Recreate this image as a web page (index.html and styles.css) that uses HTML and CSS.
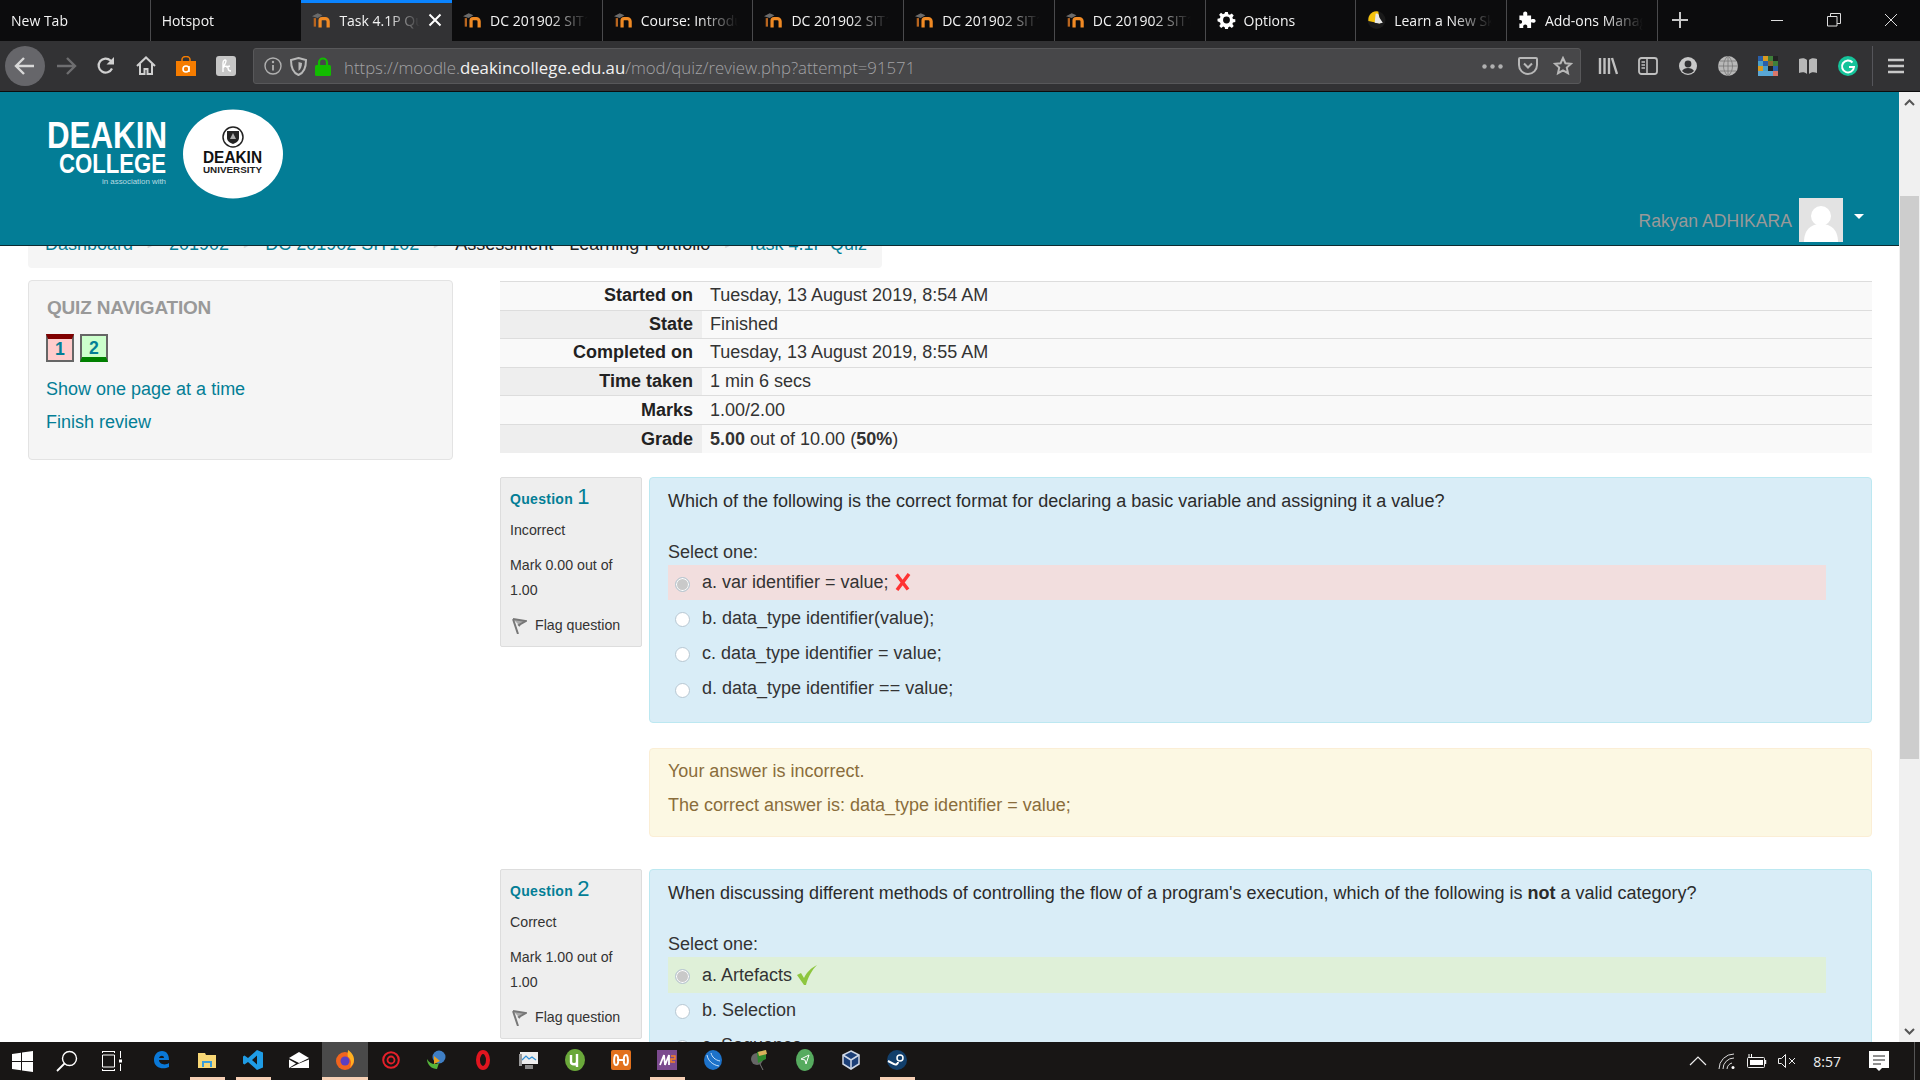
FILE: index.html
```html
<!DOCTYPE html>
<html lang="en">
<head>
    <meta charset="UTF-8">
    <title>Task 4.1P Quiz</title>
    <link rel="stylesheet" href="styles.css">
</head>
<body>
    <svg class="defs" width="0" height="0">
        <symbol id="moodle" viewBox="0 0 20 16">
            <path d="M0 4 6 1l5 2-5 3z" fill="#6b6b6b"/>
            <path d="M3 15V6" stroke="#b8651f" stroke-width="2.400" fill="none"/>
            <path d="M8.500 16V8.500a2 2 0 0 1 2-2h3.500a3 3 0 0 1 3 3V16" stroke="#f08a24" stroke-width="3.400" fill="none"/>
        </symbol>
    </svg>

    <div class="tabbar">
        <div class="tab"><span class="tab-title">New Tab</span></div>
        <div class="tab"><span class="tab-title">Hotspot</span></div>
        <div class="tab active">
            <svg class="fav"><use href="#moodle"/></svg>
            <span class="tab-title">Task 4.1P Quiz</span>
            <svg class="tab-close" width="14" height="14" viewBox="0 0 14 14"><path d="M1.500 1.500l11 11M12.500 1.500l-11 11" stroke="#fff" stroke-width="2"/></svg>
        </div>
        <div class="tab"><svg class="fav"><use href="#moodle"/></svg><span class="tab-title">DC 201902 SIT102</span></div>
        <div class="tab"><svg class="fav"><use href="#moodle"/></svg><span class="tab-title">Course: Introduction</span></div>
        <div class="tab"><svg class="fav"><use href="#moodle"/></svg><span class="tab-title">DC 201902 SIT102</span></div>
        <div class="tab"><svg class="fav"><use href="#moodle"/></svg><span class="tab-title">DC 201902 SIT102</span></div>
        <div class="tab"><svg class="fav"><use href="#moodle"/></svg><span class="tab-title">DC 201902 SIT102</span></div>
        <div class="tab">
            <svg class="fav" viewBox="0 0 20 20"><path d="M8.500 1h3l.5 2.600 1.700.7 2.200-1.500 2.100 2.100-1.500 2.200.7 1.700 2.600.5v3l-2.600.5-.7 1.700 1.500 2.200-2.100 2.100-2.200-1.500-1.700.7-.5 2.600h-3l-.5-2.600-1.700-.7-2.200 1.500-2.100-2.100 1.500-2.200-.7-1.700L0 11.500v-3l2.600-.5.7-1.700-1.500-2.200 2.100-2.100 2.200 1.500 1.700-.7z" fill="#fff"/><circle cx="10" cy="10" r="3.800" fill="#0c0c0d"/></svg>
            <span class="tab-title">Options</span>
        </div>
        <div class="tab">
            <svg class="fav" viewBox="0 0 20 20"><circle cx="10" cy="10" r="10" fill="#1a1a1a"/><path d="M1 11A9 9.500 0 0 1 12 .5L14 14z" fill="#f4c20d"/><path d="M9 3c3-1 4 2 4 4l4 6-4 1-5-1z" fill="#e8e8e8"/></svg>
            <span class="tab-title">Learn a New Skill</span>
        </div>
        <div class="tab">
            <svg class="fav" viewBox="0 0 20 20"><path d="M1 5h4.500C4.500 2 6 .5 7.500.5S10.500 2 9.500 5H14v4.500c2.500-1 5-.5 5 1.500s-2.500 2.500-5 1.500V19H9.500c1-2.500-.5-4-2-4s-3 1.500-2 4H1v-5c2 .5 3-.5 3-2s-1-2.500-3-2z" fill="#fff"/></svg>
            <span class="tab-title">Add-ons Manager</span>
        </div>
        <div class="newtab">
            <svg width="18" height="18" viewBox="0 0 18 18"><path d="M9 1v16M1 9h16" stroke="#c8c8c8" stroke-width="2"/></svg>
        </div>
        <div class="window-btns">
            <svg width="14" height="14" viewBox="0 0 14 14"><path d="M1 7.500h12" stroke="#ddd"/></svg>
            <svg width="14" height="14" viewBox="0 0 14 14"><path d="M.5 3.500h9.500v9.500H.5zM3.500 3.500V.5h10v10h-3.500" stroke="#ddd" fill="none"/></svg>
            <svg width="14" height="14" viewBox="0 0 14 14"><path d="M1 1l12 12M13 1L1 13" stroke="#ddd"/></svg>
        </div>
    </div>

    <div class="toolbar">
        <div class="tool back">
            <svg width="22" height="20" viewBox="0 0 22 20"><path d="M20 10H3M10 2l-8 8 8 8" stroke="#d8d8d8" stroke-width="2.400" fill="none"/></svg>
        </div>
        <div class="tool">
            <svg width="22" height="20" viewBox="0 0 22 20"><path d="M2 10h17M12 2l8 8-8 8" stroke="#6e6e70" stroke-width="2.400" fill="none"/></svg>
        </div>
        <div class="tool">
            <svg width="20" height="20" viewBox="0 0 20 20"><path d="M16 12.500A7 7 0 1 1 14.500 4.500L17 7" stroke="#d0d0d0" stroke-width="2.200" fill="none"/><path d="M18 1v7.500h-7.500z" fill="#d0d0d0"/></svg>
        </div>
        <div class="tool">
            <svg width="20" height="20" viewBox="0 0 20 20"><path d="M1 10 10 1.500 19 10M4 8v10h4.500v-5h3v5H16V8" stroke="#d0d0d0" stroke-width="2" fill="none"/></svg>
        </div>
        <div class="tool">
            <svg width="20" height="20" viewBox="0 0 20 20"><path d="M0 5h20v15H0z" fill="#f57c00"/><path d="M6 7V3.500a4 3 0 0 1 8 0V7" stroke="#f57c00" stroke-width="1.500" fill="none"/><circle cx="10" cy="13" r="3" stroke="#fff" stroke-width="1.600" fill="none"/><path d="M13 10v6" stroke="#fff" stroke-width="1.600"/></svg>
        </div>
        <div class="tool">
            <svg width="20" height="20" viewBox="0 0 20 20"><rect width="20" height="20" rx="3" fill="#c6c6c6"/><path d="M7 16V7c0-3 3-4 3-2s-2 4-3 7c1-2 5-3 5 0 0 2 1 3 3 3M10 11l4-1" stroke="#fff" stroke-width="1.400" fill="none"/></svg>
        </div>

        <div class="urlbar">
            <svg width="18" height="18" viewBox="0 0 18 18"><circle cx="9" cy="9" r="8" stroke="#b0b0b0" stroke-width="1.400" fill="none"/><path d="M9 8v5.500" stroke="#b0b0b0" stroke-width="1.800"/><circle cx="9" cy="5" r="1.200" fill="#b0b0b0"/></svg>
            <svg width="17" height="19" viewBox="0 0 17 19"><path d="M8.500 1 16 3c0 8-2 13-7.500 15C3 16 1 11 1 3z" stroke="#b8b8b8" stroke-width="2" fill="none"/><path d="M8.500 5 12 6c0 3.500-1 6-3.500 8z" fill="#b8b8b8"/></svg>
            <svg width="16" height="19" viewBox="0 0 16 19"><path d="M4 9V5.500a4 4 0 0 1 8 0V9" stroke="#12bc00" stroke-width="2.200" fill="none"/><rect y="8" width="16" height="11" rx="1.500" fill="#12bc00"/></svg>
            <span class="url"><span>https://moodle.</span><b>deakincollege.edu.au</b><span>/mod/quiz/review.php?attempt=91571</span></span>
            <div class="url-end">
                <svg width="21" height="5" viewBox="0 0 21 5"><circle cx="2.500" cy="2.500" r="2.200" fill="#b0b0b0"/><circle cx="10.500" cy="2.500" r="2.200" fill="#b0b0b0"/><circle cx="18.500" cy="2.500" r="2.200" fill="#b0b0b0"/></svg>
                <svg width="20" height="18" viewBox="0 0 20 18"><path d="M2 1h16a1 1 0 0 1 1 1v6a9 9 0 0 1-18 0V2a1 1 0 0 1 1-1z" stroke="#b8b8b8" stroke-width="2" fill="none"/><path d="M6 6.500l4 4 4-4" stroke="#b8b8b8" stroke-width="2" fill="none"/></svg>
                <svg width="20" height="20" viewBox="0 0 20 20"><path d="M10 2l2.400 5.200 5.600.6-4.200 3.800 1.200 5.600-5-2.900-5 2.900 1.200-5.600L2 7.800l5.600-.6z" stroke="#b8b8b8" stroke-width="2" fill="none"/></svg>
            </div>
        </div>

        <div class="tool-group">
            <div class="tool">
                <svg width="20" height="18" viewBox="0 0 20 18"><path d="M2 1v16M6.500 1v16M11 1v16M14 1l5 16" stroke="#c0c0c0" stroke-width="2.400" fill="none"/></svg>
            </div>
            <div class="tool">
                <svg width="20" height="18" viewBox="0 0 20 18"><rect x="1" y="1" width="18" height="16" rx="2.500" stroke="#c0c0c0" stroke-width="1.800" fill="none"/><path d="M9 1v16M3.500 5H7M3.500 8H7M3.500 11H7" stroke="#c0c0c0" stroke-width="1.500"/></svg>
            </div>
            <div class="tool">
                <svg width="18" height="18" viewBox="0 0 18 18"><circle cx="9" cy="9" r="9" fill="#c8c8c8"/><circle cx="9" cy="7" r="3.400" fill="#323234"/><path d="M3 14c2-4 10-4 12 0a8 8 0 0 1-12 0z" fill="#323234"/></svg>
            </div>
            <div class="tool">
                <svg width="20" height="20" viewBox="0 0 20 20"><circle cx="10" cy="10" r="10" fill="#b8b8b8"/><path d="M10 0v20M0 10h20M2 5h16M2 15h16M10 0c-6 5-6 15 0 20M10 0c6 5 6 15 0 20" stroke="#777" stroke-width=".8" fill="none"/></svg>
            </div>
            <div class="tool">
                <div class="mosaic">
                    <i class="m1"></i><i class="m2"></i><i class="m3"></i><i class="m4"></i>
                    <i class="m5"></i><i class="m1"></i><i class="m6"></i><i class="m3"></i>
                    <i class="m2"></i><i class="m5"></i><i class="m4"></i><i class="m1"></i>
                    <i class="m7"></i><i class="m7"></i><i class="m7"></i><i class="m8"></i>
                </div>
            </div>
            <div class="tool">
                <svg width="20" height="18" viewBox="0 0 20 18"><path d="M1 2c3-1 6-1 8 1v14c-2-2-5-2-8-1zM19 2c-3-1-6-1-8 1v14c2-2 5-2 8-1z" fill="#b8b8b8"/></svg>
            </div>
            <div class="tool">
                <svg width="20" height="20" viewBox="0 0 20 20"><circle cx="10" cy="10" r="10" fill="#15c39a"/><path d="M14.500 6.500A6 6 0 1 0 16 11h-5" stroke="#fff" stroke-width="2" fill="none"/></svg>
            </div>
        </div>
        <div class="tool-sep"></div>
        <div class="tool">
            <svg width="16" height="16" viewBox="0 0 16 16"><path d="M0 2h16M0 8h16M0 14h16" stroke="#c8c8c8" stroke-width="2.400"/></svg>
        </div>
    </div>

    <div class="viewport">
        <div class="page">
            <header class="site-header">
                <svg class="logo" width="236" height="90" viewBox="0 0 236 90">
                    <text x="-1" y="39" class="logo-big" textLength="120" lengthAdjust="spacingAndGlyphs">DEAKIN</text>
                    <text x="11" y="63.500" class="logo-mid" textLength="107" lengthAdjust="spacingAndGlyphs">COLLEGE</text>
                    <text x="54" y="75" class="logo-small" textLength="64" lengthAdjust="spacingAndGlyphs">in association with</text>
                    <ellipse cx="185" cy="45" rx="50" ry="44.500" fill="#fff"/>
                    <circle cx="185" cy="28" r="10" fill="none" stroke="#222" stroke-width="1.500"/>
                    <path d="M179 22h12v7c0 3-3 5-6 6-3-1-6-3-6-6z" fill="#222"/>
                    <path d="M185 24l-3 6h6z" fill="#aaa"/>
                    <text x="155" y="54" class="logo-uni" textLength="59" lengthAdjust="spacingAndGlyphs">DEAKIN</text>
                    <text x="155" y="64" class="logo-uni2" textLength="59" lengthAdjust="spacingAndGlyphs">UNIVERSITY</text>
                </svg>
                <div class="user-menu">
                    <span class="user-name">Rakyan ADHIKARA</span>
                    <svg class="avatar" width="44" height="44" viewBox="0 0 44 44"><rect width="44" height="44" fill="#e3e3e3"/><circle cx="22" cy="18" r="10" fill="#fff"/><path d="M5 44c0-14 9-18 17-18s17 4 17 18z" fill="#fff"/></svg>
                    <span class="caret"></span>
                </div>
            </header>

            <nav class="breadcrumb">
                <a href="#">Dashboard</a><span class="crumb-sep">►</span>
                <a href="#">201902</a><span class="crumb-sep">►</span>
                <a href="#">DC 201902 SIT102</a><span class="crumb-sep">►</span>
                <span class="crumb-now">Assessment - Learning Portfolio</span><span class="crumb-sep">►</span>
                <a href="#">Task 4.1P Quiz</a>
            </nav>

            <div class="columns">
                <aside class="quiz-nav">
                    <h3>QUIZ NAVIGATION</h3>
                    <div class="nav-btns">
                        <a class="nav-btn wrong" href="#">1</a>
                        <a class="nav-btn right" href="#">2</a>
                    </div>
                    <a class="nav-link" href="#">Show one page at a time</a>
                    <a class="nav-link" href="#">Finish review</a>
                </aside>

                <main class="review">
                    <table class="summary">
                        <tr><th>Started on</th><td>Tuesday, 13 August 2019, 8:54 AM</td></tr>
                        <tr><th>State</th><td>Finished</td></tr>
                        <tr><th>Completed on</th><td>Tuesday, 13 August 2019, 8:55 AM</td></tr>
                        <tr><th>Time taken</th><td>1 min 6 secs</td></tr>
                        <tr><th>Marks</th><td>1.00/2.00</td></tr>
                        <tr><th>Grade</th><td><b>5.00</b> out of 10.00 (<b>50%</b>)</td></tr>
                    </table>

                    <section class="question">
                        <div class="q-info">
                            <h4>Question <span>1</span></h4>
                            <p class="q-state">Incorrect</p>
                            <p class="q-mark">Mark 0.00 out of 1.00</p>
                            <p class="q-flag">
                                <svg width="15" height="16" viewBox="0 0 15 16"><path d="M1 1l13 2-7 4 1 1M1 1l5 15" stroke="#777" stroke-width="2" fill="#aaa"/></svg>
                                Flag question
                            </p>
                        </div>
                        <div class="q-body">
                            <div class="q-box">
                                <p class="q-text">Which of the following is the correct format for declaring a basic variable and assigning it a value?</p>
                                <p class="q-select">Select one:</p>
                                <div class="answer wrong-ans">
                                    <span class="radio checked"></span>
                                    <span>a. var identifier = value;</span>
                                    <svg class="mark-icon" width="17" height="18" viewBox="0 0 17 18"><path d="M2.500 1.500 14 16.500M15 1 3 17" stroke="#f33" stroke-width="3.400" fill="none"/></svg>
                                </div>
                                <div class="answer"><span class="radio"></span><span>b. data_type identifier(value);</span></div>
                                <div class="answer"><span class="radio"></span><span>c. data_type identifier = value;</span></div>
                                <div class="answer"><span class="radio"></span><span>d. data_type identifier == value;</span></div>
                            </div>
                            <div class="q-feedback">
                                <p>Your answer is incorrect.</p>
                                <p>The correct answer is: data_type identifier = value;</p>
                            </div>
                        </div>
                    </section>

                    <section class="question second">
                        <div class="q-info">
                            <h4>Question <span>2</span></h4>
                            <p class="q-state">Correct</p>
                            <p class="q-mark">Mark 1.00 out of 1.00</p>
                            <p class="q-flag">
                                <svg width="15" height="16" viewBox="0 0 15 16"><path d="M1 1l13 2-7 4 1 1M1 1l5 15" stroke="#777" stroke-width="2" fill="#aaa"/></svg>
                                Flag question
                            </p>
                        </div>
                        <div class="q-body">
                            <div class="q-box">
                                <p class="q-text">When discussing different methods of controlling the flow of a program's execution, which of the following is <b>not</b> a valid category?</p>
                                <p class="q-select">Select one:</p>
                                <div class="answer right-ans">
                                    <span class="radio checked"></span>
                                    <span>a. Artefacts</span>
                                    <svg class="mark-icon" width="20" height="20" viewBox="0 0 20 20"><path d="M0 10l4-2 3 5C10 7 14 3 20 0c-5 5-9 12-11 20H7z" fill="#8dc63f"/></svg>
                                </div>
                                <div class="answer"><span class="radio"></span><span>b. Selection</span></div>
                                <div class="answer"><span class="radio"></span><span>c. Sequence</span></div>
                            </div>
                        </div>
                    </section>
                </main>
            </div>
        </div>

        <div class="scrollbar">
            <div class="sb-btn"><svg width="11" height="7" viewBox="0 0 11 7"><path d="M1 6l4.500-4.500L10 6" stroke="#555" stroke-width="2" fill="none"/></svg></div>
            <div class="sb-thumb"></div>
            <div class="sb-btn sb-down"><svg width="11" height="7" viewBox="0 0 11 7"><path d="M1 1l4.500 4.500L10 1" stroke="#555" stroke-width="2" fill="none"/></svg></div>
        </div>
    </div>

    <div class="taskbar">
        <div class="tb-start">
            <svg width="21" height="21" viewBox="0 0 21 21"><path d="M0 3l9-1.300v8.300H0zM10 1.500 21 0v10H10zM0 11h9v8.300L0 18zM10 11h11v10l-11-1.500z" fill="#fff"/></svg>
        </div>
        <div class="tb-start search">
            <svg width="22" height="22" viewBox="0 0 22 22"><circle cx="13.500" cy="8.500" r="7" stroke="#fff" stroke-width="1.400" fill="none"/><path d="M8.500 13.500 1 21" stroke="#fff" stroke-width="1.800"/></svg>
        </div>
        <div class="tb-start">
            <svg width="20" height="20" viewBox="0 0 20 20"><path d="M0 .5h13M0 19.500h13M.5 4h12v12H.5zM.5 0v2M12.500 0v2M.5 18v2M12.500 18v2M18.500 0v7M18.500 13v7" stroke="#fff" fill="none"/><rect x="17" y="8.500" width="3" height="3" fill="#fff"/></svg>
        </div>
        <div class="tb-apps">
            <div class="tb-item"><svg width="18" height="20" viewBox="0 0 18 20"><path d="M2 10c0-5 3-9 8-9 5 0 7 4 7 9H7c0 4 6 6 10 3v4c-6 3-15 1-15-7zm5-2h5c0-3-4-3-5 0z" fill="#0a78d7"/></svg></div>
            <div class="tb-item running"><svg width="18" height="16" viewBox="0 0 18 16"><path d="M0 1h7l1 2h10v13H0z" fill="#f8d775"/><path d="M4 9h10v6h-2v-4H6v4H4z" fill="#3b9edb"/></svg></div>
            <div class="tb-item running"><svg width="20" height="20" viewBox="0 0 20 20"><path d="M14 0l6 2.500v15L14 20 5 12l-3.500 2.500L0 13.500v-7L1.500 5.500 5 8zm0 5.500L9 10l5 4.500z" fill="#1f9ce5"/></svg></div>
            <div class="tb-item"><svg width="20" height="16" viewBox="0 0 20 16"><path d="M0 6 10 0l10 6L10 11z" fill="#fff"/><path d="M0 7.500l7 4L0 16zM20 7.500V16H1l9-4.500z" fill="#fff"/></svg></div>
            <div class="tb-item running current"><svg width="20" height="20" viewBox="0 0 20 20"><circle cx="10" cy="11" r="9" fill="#f0641e"/><path d="M13 0c3 2 6 5 6 10 0 3-2 6-4 7 2-4 1-8-2-10-1-2 0-5 0-7z" fill="#ffb020"/><circle cx="10" cy="11" r="4.500" fill="#5a3fc0"/></svg></div>
            <div class="tb-item"><svg width="18" height="18" viewBox="0 0 18 18"><circle cx="9" cy="9" r="7.800" stroke="#e5202a" stroke-width="2" fill="none"/><circle cx="9" cy="9" r="3.500" stroke="#e5202a" stroke-width="1.800" fill="none"/></svg></div>
            <div class="tb-item"><svg width="20" height="20" viewBox="0 0 20 20"><circle cx="12" cy="7" r="6.500" fill="#3f7fc5"/><path d="M0 9c3 5 7 6 12 4l-2 6c-5 0-10-4-10-10z" fill="#55b33b"/><path d="M7 6l6 5-6 3z" fill="#e8a020"/></svg></div>
            <div class="tb-item"><svg width="14" height="20" viewBox="0 0 14 20"><ellipse cx="7" cy="10" rx="5" ry="8" stroke="#e0151f" stroke-width="4" fill="none"/></svg></div>
            <div class="tb-item"><svg width="20" height="20" viewBox="0 0 20 20"><path d="M1 2h18v12H1z" fill="#eee"/><path d="M3 10l4-4 3 3 3-2 4 3" stroke="#2f8fd6" stroke-width="1.200" fill="none"/><path d="M6 15h8v4H6z" fill="#888"/><path d="M0 4h3v12H0z" fill="#999"/></svg></div>
            <div class="tb-item"><svg width="20" height="22" viewBox="0 0 20 22"><ellipse cx="10" cy="11" rx="10" ry="11" fill="#6aa83a"/><path d="M6 6v7c0 3 6 3 6 0V6M12 5v13" stroke="#fff" stroke-width="2.400" fill="none"/></svg></div>
            <div class="tb-item"><svg width="20" height="20" viewBox="0 0 20 20"><rect width="20" height="20" rx="2" fill="#e2711d"/><path d="M5 5c3 0 3 10 0 10s-2-10 0-10zM15 5c-3 0-3 10 0 10s2-10 0-10zM6 10h8" stroke="#fff" stroke-width="2" fill="none"/></svg></div>
            <div class="tb-item running"><svg width="20" height="20" viewBox="0 0 20 20"><rect width="20" height="20" fill="#7b4a8e"/><path d="M3 15 7 5l1 10 4-10v10" stroke="#fff" stroke-width="1.800" fill="none"/><path d="M14 6h4v3h-4v3h4" stroke="#f58025" stroke-width="1.500" fill="none"/></svg></div>
            <div class="tb-item"><svg width="18" height="20" viewBox="0 0 18 20"><ellipse cx="9" cy="10" rx="9" ry="10" fill="#1d72c9"/><path d="M3 5c1 6 6 10 12 11M7 3c1 4 4 7 9 8" stroke="#cde4fa" stroke-width="1" fill="none"/></svg></div>
            <div class="tb-item"><svg width="18" height="22" viewBox="0 0 18 22"><circle cx="7" cy="10" r="6" fill="#666"/><path d="M7 3l9-2v9l-8 4z" fill="#2e8b2e"/><path d="M8 3l8-2 1 4-8 2z" fill="#d9b25c"/><path d="M10 15l3 6" stroke="#777"/></svg></div>
            <div class="tb-item"><svg width="18" height="22" viewBox="0 0 18 22"><ellipse cx="9" cy="11" rx="9" ry="11" fill="#56ab5f"/><path d="M13 6 5 10l4 1 1 4z" stroke="#fff" fill="none"/></svg></div>
            <div class="tb-item"><svg width="18" height="20" viewBox="0 0 18 20"><path d="M9 1l8 4v9l-8 5-8-5V5z" stroke="#cfd8e6" stroke-width="1.500" fill="#1c3f77"/><path d="M1 5l8 5 8-5M9 10v9" stroke="#cfd8e6" stroke-width="1.500" fill="none"/></svg></div>
            <div class="tb-item running"><svg width="20" height="20" viewBox="0 0 20 20"><circle cx="10" cy="10" r="10" fill="#123f6b"/><circle cx="13" cy="8" r="3" fill="none" stroke="#fff" stroke-width="1.500"/><path d="M1 11l6 3a2.500 2.500 0 0 0 4-2" stroke="#fff" stroke-width="2" fill="none"/></svg></div>
        </div>
        <div class="tb-tray">
            <svg width="18" height="10" viewBox="0 0 18 10"><path d="M1 9l8-8 8 8" stroke="#eee" stroke-width="1.200" fill="none"/></svg>
            <svg width="18" height="16" viewBox="0 0 18 16"><path d="M1 16A15 15 0 0 1 16 1M5 16A11 11 0 0 1 16 5M9 16a7 7 0 0 1 5-6" stroke="#ddd" fill="none"/><circle cx="15" cy="14.500" r="1.500" fill="#fff"/></svg>
            <svg width="20" height="14" viewBox="0 0 20 14"><rect x=".5" y="3.500" width="17" height="10" rx="1" stroke="#eee" fill="none"/><rect x="3" y="6" width="13" height="5" fill="#fff"/><path d="M18.500 6v4" stroke="#eee" stroke-width="1.500"/><path d="M2 0v4M4.500 0v4" stroke="#fff"/></svg>
            <svg width="19" height="14" viewBox="0 0 19 14"><path d="M.5 4.500h3L7.500.5v13l-4-4h-3z" stroke="#eee" fill="none"/><path d="M11 4l6 6M17 4l-6 6" stroke="#eee"/></svg>
            <span class="tb-time">8:57</span>
            <svg class="tb-notify" width="20" height="20" viewBox="0 0 20 20"><path d="M0 0h20v17h-7l-3 3-3-3H0z" fill="#fff"/><path d="M4 5h12M4 9h12M4 13h8" stroke="#222"/></svg>
        </div>
    </div>
</body>
</html>
```

FILE: styles.css
```css
html, body {
    margin: 0;
    padding: 0;
    height: 1080px;
    overflow: hidden;
    font-family: "Liberation Sans", Arial, sans-serif;
    background-color: white;
    color: #333;
}
body {
    display: flex;
    flex-direction: column;
}
a {
    color: #037e96;
    text-decoration: none;
}
p {
    margin: 0;
}
.defs {
    position: absolute;
}

/* browser tabs */
.tabbar {
    display: flex;
    height: 41px;
    flex: none;
    background-color: #0c0c0d;
    font-family: "Open Sans", sans-serif;
    font-size: 14px;
    color: #f4f4f4;
}
.tab {
    width: 150.7px;
    box-sizing: border-box;
    display: flex;
    align-items: center;
    gap: 8px;
    padding: 0 14px 1px 11px;
    border-right: 1px solid #4a4a4c;
    flex: none;
}
.tab.active {
    background-color: #323234;
    border-top: 3px solid #0a84ff;
    border-right: none;
    padding-right: 10px;
    padding-top: 0;
    padding-bottom: 4px;
}
.tab:nth-child(2) {
    border-right: none;
}
.tab-title {
    flex: 1;
    white-space: nowrap;
    overflow: hidden;
    -webkit-mask-image: linear-gradient(to right, black 60%, transparent 100%);
    mask-image: linear-gradient(to right, black 60%, transparent 100%);
}
.fav {
    width: 19px;
    height: 18px;
    flex: none;
}
.tab-close {
    flex: none;
}
.newtab {
    width: 44px;
    display: flex;
    align-items: center;
    justify-content: center;
    margin-top: -2px;
}
.window-btns {
    margin-left: auto;
    display: flex;
    gap: 43px;
    align-items: center;
    padding-right: 22px;
    margin-top: -2px;
}

/* toolbar */
.toolbar {
    display: flex;
    align-items: center;
    height: 50px;
    flex: none;
    padding-left: 5px;
    background-color: #323234;
    border-bottom: 1px solid #0c0c0d;
}
.tool {
    width: 40px;
    height: 40px;
    display: flex;
    align-items: center;
    justify-content: center;
    flex: none;
}
.tool.back {
    margin-right: 1px;
    background-color: #66666a;
    border-radius: 50%;
}
.tool-group {
    display: flex;
    margin-left: 7px;
}
.tool-sep {
    width: 1px;
    height: 40px;
    margin: 0 3px 0 4px;
    background-color: #55555a;
}
.urlbar {
    width: 1328px;
    height: 36px;
    margin-left: 7px;
    box-sizing: border-box;
    display: flex;
    align-items: center;
    gap: 8px;
    padding: 0 7px 0 10px;
    background-color: #474749;
    border: 1px solid #58585a;
    border-radius: 3px;
    flex: none;
}
.url {
    font-family: "Open Sans", sans-serif;
    font-weight: 300;
    font-size: 16.8px;
    color: #a2a2a5;
    white-space: nowrap;
    margin: 2px 0 0 5px;
}
.url b {
    font-weight: normal;
    color: #f2f2f2;
}
.url-end {
    margin-left: auto;
    display: flex;
    align-items: center;
    gap: 15px;
}
.mosaic {
    width: 20px;
    height: 20px;
    display: grid;
    grid-template-columns: repeat(4, 1fr);
    grid-template-rows: repeat(4, 1fr);
}
.m1 { background-color: #2a5fa8; }
.m2 { background-color: #d99a20; }
.m3 { background-color: #3e7f3a; }
.m4 { background-color: #222; }
.m5 { background-color: #4aa0c8; }
.m6 { background-color: #8a6a30; }
.m7 { background-color: #5aa7d6; }
.m8 { background-color: #d9776a; }

/* page area */
.viewport {
    flex: 1;
    min-height: 0;
    display: flex;
}
.page {
    flex: 1;
    min-width: 0;
    overflow: hidden;
}
.scrollbar {
    width: 21px;
    flex: none;
    display: flex;
    flex-direction: column;
    background-color: #f0f0f0;
}
.sb-btn {
    height: 21px;
    display: flex;
    align-items: center;
    justify-content: center;
    flex: none;
}
.sb-thumb {
    height: 563px;
    margin: 83px 1px 0;
    background-color: #cdcdcd;
}
.sb-down {
    margin-top: auto;
}

/* site header */
.site-header {
    position: relative;
    z-index: 2;
    height: 153px;
    display: flex;
    justify-content: space-between;
    padding: 0 35px 0 48px;
    background-color: #037d96;
    border-bottom: 1px solid #0d2a30;
}
.logo {
    margin-top: 17px;
}
.logo-big {
    font: bold 37px "Liberation Sans", sans-serif;
    fill: white;
}
.logo-mid {
    font: bold 28px "Liberation Sans", sans-serif;
    fill: white;
}
.logo-small {
    font: 7px "Liberation Sans", sans-serif;
    fill: #b9dbe2;
}
.logo-uni {
    font: bold 17px "Liberation Sans", sans-serif;
    fill: #111;
}
.logo-uni2 {
    font: bold 8.500px "Liberation Sans", sans-serif;
    fill: #222;
}
.user-menu {
    display: flex;
    align-self: flex-end;
    align-items: center;
    margin-bottom: 3px;
}
.user-name {
    font-size: 17.6px;
    color: #999;
    margin-top: 2px;
}
.avatar {
    margin-left: 7px;
}
.caret {
    width: 0;
    height: 0;
    margin: -7px 0 0 11px;
    border-top: 5px solid white;
    border-left: 5px solid transparent;
    border-right: 5px solid transparent;
}

/* breadcrumb sits partly behind the header */
.breadcrumb {
    width: max-content;
    margin: -24px 0 0 28px;
    padding: 10px 15px 11px 17px;
    display: flex;
    font-size: 18px;
    line-height: 25px;
    background-color: #f5f5f5;
    border-radius: 4px;
}
.crumb-sep {
    width: 36px;
    text-align: center;
    color: #d5d5d5;
    font-size: 11px;
}
.crumb-now {
    color: #222;
}

.columns {
    display: flex;
    align-items: flex-start;
    padding: 12px 27px 0 28px;
}

/* quiz navigation block */
.quiz-nav {
    width: 425px;
    height: 180px;
    box-sizing: border-box;
    flex: none;
    margin-right: 47px;
    padding: 14px 17px;
    background-color: #f5f5f5;
    border: 1px solid #e3e3e3;
    border-radius: 4px;
}
.quiz-nav h3 {
    margin: 0 0 14px 1px;
    font-size: 19px;
    line-height: 25px;
    letter-spacing: -0.2px;
    color: #999;
}
.nav-btns {
    display: flex;
    gap: 6px;
    margin-bottom: 11px;
}
.nav-btn {
    width: 28px;
    height: 28px;
    box-sizing: border-box;
    border: 2px solid #666;
    text-align: center;
    font-weight: bold;
    font-size: 17.6px;
    line-height: 25px;
}
.nav-btn.wrong {
    background-color: #fcc;
    border-top: 5px solid #800000;
    line-height: 21px;
}
.nav-btn.right {
    background-color: #cfc;
    border-bottom: 5px solid #008000;
}
.nav-link {
    display: block;
    font-size: 18px;
    line-height: 33px;
}

/* attempt summary */
.review {
    flex: 1;
    min-width: 0;
    padding-top: 1px;
}
.summary {
    width: 100%;
    border-collapse: collapse;
    font-size: 18px;
}
.summary tr {
    height: 28.6px;
}
.summary th, .summary td {
    padding: 0;
    border-top: 1px solid #ddd;
    background-color: #f9f9f9;
}
.summary th {
    width: 193px;
    padding-right: 9px;
    text-align: right;
    color: #222;
}
.summary td {
    padding-left: 8px;
    color: #333;
}
.summary tr:nth-child(even) th {
    background-color: #eee;
}

/* questions */
.question {
    display: flex;
    align-items: flex-start;
    gap: 7px;
    margin-top: 24px;
}
.question.second {
    margin-top: 32px;
}
.q-info {
    width: 142px;
    box-sizing: border-box;
    flex: none;
    padding: 8px 9px 8px;
    background-color: #eee;
    border: 1px solid #ddd;
    border-radius: 2px;
    font-size: 14.2px;
    line-height: 25px;
    color: #333;
}
.q-info h4 {
    height: 26px;
    margin: 0 0 6px;
    font-size: 14px;
    letter-spacing: 0.3px;
    color: #037e96;
}
.q-info h4 span {
    font-weight: normal;
    font-size: 22px;
    line-height: 1;
}
.q-mark {
    margin-bottom: 10px;
}
.q-state {
    margin-bottom: 10px;
}
.q-flag {
    display: flex;
    align-items: center;
    gap: 8px;
    padding-left: 2px;
}
.q-body {
    flex: 1;
    min-width: 0;
}
.q-box {
    padding: 11px 45px 16px 18px;
    background-color: #d9edf7;
    border: 1px solid #bce8f1;
    border-radius: 4px;
    font-size: 18px;
    line-height: 25px;
}
.q-text {
    color: #2b2b2b;
}
.q-select {
    margin-top: 26px;
}
.answer {
    display: flex;
    align-items: center;
    height: 35.33px;
    padding-left: 7px;
}
.wrong-ans {
    background-color: #f2dede;
}
.right-ans {
    background-color: #dff0d8;
}
.radio {
    width: 15px;
    height: 15px;
    box-sizing: border-box;
    margin: 3px 12px 0 0;
    background-color: white;
    border: 1px solid #b7c7d2;
    border-radius: 50%;
}
.radio.checked {
    background-color: #c9c9c9;
    box-shadow: inset 0 0 0 1px white;
}
.mark-icon {
    margin-left: 5px;
    margin-top: -1px;
}
.q-feedback {
    margin-top: 25px;
    padding: 5px 18px 14px;
    background-color: #fcf8e3;
    border: 1px solid #fbeed5;
    border-radius: 4px;
    font-size: 18px;
    line-height: 34px;
    color: #8a6d3b;
}

/* windows taskbar */
.taskbar {
    height: 38px;
    flex: none;
    display: flex;
    align-items: center;
    background-color: #181615;
    color: #eee;
}
.tb-start {
    width: 44px;
    height: 100%;
    display: flex;
    align-items: center;
    justify-content: center;
    flex: none;
}
.tb-start.search {
    width: 46px;
}
.tb-apps {
    display: flex;
    height: 100%;
    margin-left: 4px;
}
.tb-item {
    width: 46px;
    height: 100%;
    display: flex;
    align-items: center;
    justify-content: center;
    padding-bottom: 2px;
    box-sizing: border-box;
}
.tb-item.running {
    background: linear-gradient(#f6d0b5, #f6d0b5) center bottom / 35px 3px no-repeat;
}
.tb-item.current {
    background: linear-gradient(#f6d0b5, #f6d0b5) center bottom / 100% 3px no-repeat, #4a4a4a;
}
.tb-tray {
    margin-left: auto;
    margin-right: 5px;
    height: 100%;
    display: flex;
    align-items: center;
    gap: 11px;
    padding-right: 25px;
    border-right: 1px solid #555;
}
.tb-time {
    font-family: "Open Sans", sans-serif;
    font-size: 14px;
    margin: 0 8px 0 5px;
}
.tb-notify {
    margin-left: 9px;
}
```
